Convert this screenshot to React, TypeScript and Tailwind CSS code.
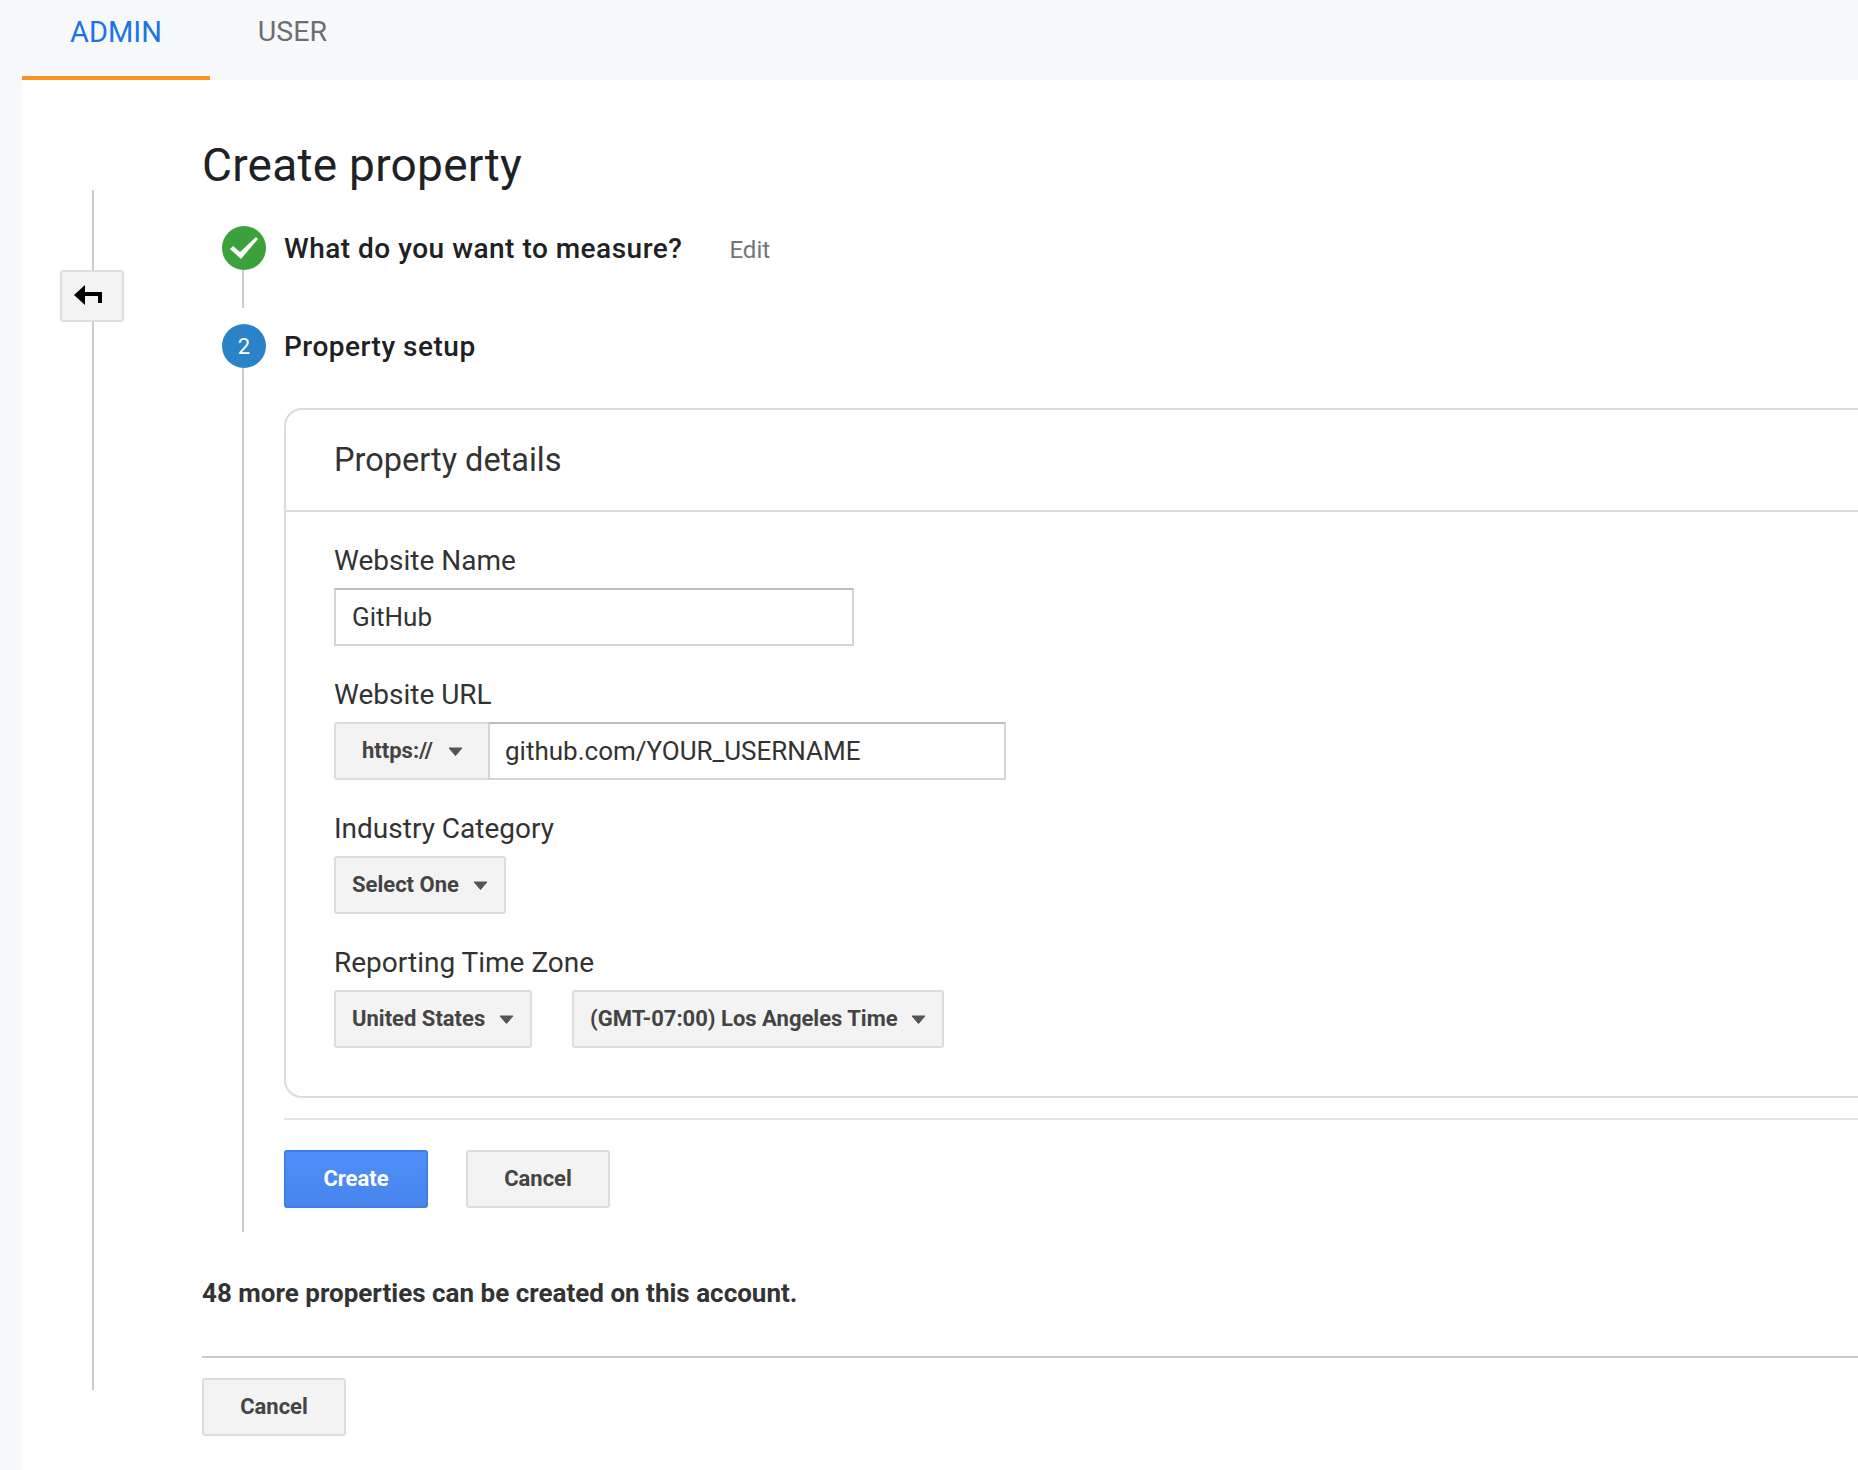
function Caret() {
  return (
    <svg width="15" height="9" viewBox="0 0 15 9" className="shrink-0">
      <path d="M1 1h13L7.5 8.5z" fill="#555" stroke="#555" strokeLinejoin="round" />
    </svg>
  );
}

function SelectButton({ label, className }: { label: string; className: string }) {
  return (
    <div className={`flex h-[58px] items-center justify-between rounded-[3px] border-2 border-[#dcdcdc] bg-[#f3f3f3] pl-[16px] pr-[16px] text-[22px] font-bold text-[#444] ${className}`}>
      <span className="pb-[1px]">{label}</span>
      <Caret />
    </div>
  );
}

function ActionButton({ label, primary }: { label: string; primary?: boolean }) {
  return (
    <button
      className={
        primary
          ? 'flex h-[58px] w-[144px] items-center justify-center rounded-[3px] border-2 border-[#3f7fe8] bg-gradient-to-b from-[#4e8ffa] to-[#4785ec] pb-[1px] text-[22px] font-bold text-white'
          : 'flex h-[58px] w-[144px] items-center justify-center rounded-[3px] border-2 border-[#dcdcdc] bg-[#f3f3f3] pb-[1px] text-[22px] font-bold text-[#444]'
      }
    >
      {label}
    </button>
  );
}

function FieldLabel({ children }: { children: string }) {
  return <div className="text-[28px] leading-[32px] text-[#333]">{children}</div>;
}

export default function App() {
  return (
    <div className="flex h-[1470px] w-[1858px] flex-col overflow-hidden bg-[#f8f9fa] font-['Roboto',sans-serif]">
      {/* tabs */}
      <div className="flex h-[80px] shrink-0 pl-[22px]">
        <div className="h-[80px] border-b-4 border-[#ff9123] px-[48px] pt-[15px] text-[29px] leading-[34px] text-[#1a73e8]">ADMIN</div>
        <div className="px-[48px] pt-[15px] text-[28.5px] leading-[34px] text-[#6b6f73]">USER</div>
      </div>

      <div className="ml-[22px] flex flex-1 overflow-hidden bg-white">
        {/* back rail */}
        <div className="ml-[38px] mt-[110px] flex h-[1200px] w-[64px] shrink-0 flex-col items-center">
          <div className="ml-[1px] h-[80px] w-[2px] bg-[#ccc]" />
          <div className="flex h-[52px] w-[64px] shrink-0 items-center justify-center rounded-[3px] border-2 border-[#dedede] bg-[#f3f3f3]">
            <svg width="28" height="20" viewBox="0 0 28 20" className="mb-[3px] mr-[8px]">
              <path d="M0 10L11 0v7h17v11h-4v-7H11v9z" fill="#000" />
            </svg>
          </div>
          <div className="ml-[1px] h-[1068px] w-[2px] bg-[#ccc]" />
        </div>

        <div className="ml-[78px] w-[1800px] shrink-0">
          <h1 className="mt-[56px] h-[58px] text-[46px] leading-[58px] tracking-[0.25px] text-[#202124]">Create property</h1>

          {/* step 1 */}
          <div className="ml-[20px] mt-[32px] flex h-[98px]">
            <div className="flex w-[44px] shrink-0 flex-col">
              <div className="flex h-[44px] w-[44px] items-center justify-center rounded-full bg-[#3ca13a]">
                <svg width="28" height="22" viewBox="0 0 28 22">
                  <path d="M0 12l3-3 7 6L26 0l2 2L11 22z" fill="#fff" />
                </svg>
              </div>
              <div className="ml-[20px] h-[38px] w-[2px] bg-[#ccc]" />
            </div>
            <div className="ml-[18px] flex h-[44px] items-center pt-[1px]">
              <span className="text-[28px] font-medium tracking-[0.5px] text-[#202124]">What do you want to measure?</span>
              <span className="ml-[47px] pt-[3px] text-[24px] text-[#70757a]">Edit</span>
            </div>
          </div>

          {/* step 2 */}
          <div className="ml-[20px] flex h-[908px]">
            <div className="flex w-[44px] shrink-0 flex-col">
              <div className="flex h-[44px] w-[44px] shrink-0 items-center justify-center rounded-full bg-[#2a83c9] text-[22px] text-white">2</div>
              <div className="ml-[20px] h-[864px] w-[2px] bg-[#ccc]" />
            </div>
            <div className="ml-[18px] flex-1">
              <div className="flex h-[44px] items-center pt-[1px] text-[28px] font-medium tracking-[0.5px] text-[#202124]">Property setup</div>

              {/* card */}
              <div className="mt-[40px] h-[690px] rounded-[18px] border-2 border-[#dadce0]">
                <div className="flex h-[102px] items-center border-b-2 border-[#dadce0] pl-[48px] text-[32.5px] text-[#333]">Property details</div>
                <div className="pl-[48px]">
                  <div className="pt-[33px]"><FieldLabel>Website Name</FieldLabel></div>
                  <div className="mt-[11px] flex h-[58px] w-[520px] items-center border-2 border-[#d4d4d4] border-t-[#bdbdbd] pl-[16px] pt-[1px] text-[26px] text-[#333]">GitHub</div>

                  <div className="mt-[33px]"><FieldLabel>Website URL</FieldLabel></div>
                  <div className="mt-[11px] flex h-[58px] w-[672px]">
                    <div className="flex w-[154px] shrink-0 items-center rounded-l-[3px] border-2 border-r-0 border-[#dcdcdc] bg-[#f3f3f3] pl-[26px] text-[22px] font-bold text-[#444]">
                      <span className="pb-[1px]">https://</span>
                      <span className="ml-[15px]"><Caret /></span>
                    </div>
                    <div className="flex flex-1 items-center border-2 border-[#d4d4d4] border-t-[#bdbdbd] pl-[15px] pt-[1px] text-[26px] text-[#333]">github.com/YOUR_USERNAME</div>
                  </div>

                  <div className="mt-[33px]"><FieldLabel>Industry Category</FieldLabel></div>
                  <div className="mt-[11px]"><SelectButton label="Select One" className="w-[172px]" /></div>

                  <div className="mt-[33px]"><FieldLabel>Reporting Time Zone</FieldLabel></div>
                  <div className="mt-[11px] flex gap-[40px]">
                    <SelectButton label="United States" className="w-[198px]" />
                    <SelectButton label="(GMT-07:00) Los Angeles Time" className="w-[372px]" />
                  </div>
                </div>
              </div>

              <div className="mt-[20px] h-[2px] bg-[#e4e4e4]" />
              <div className="mt-[30px] flex gap-[38px]">
                <ActionButton label="Create" primary />
                <ActionButton label="Cancel" />
              </div>
            </div>
          </div>

          <div className="mt-[45px] text-[26px] font-bold leading-[32px] text-[#333]">48 more properties can be created on this account.</div>
          <div className="mt-[47px] h-[2px] bg-[#ccc]" />
          <div className="mt-[20px]"><ActionButton label="Cancel" /></div>
        </div>
      </div>
    </div>
  );
}
